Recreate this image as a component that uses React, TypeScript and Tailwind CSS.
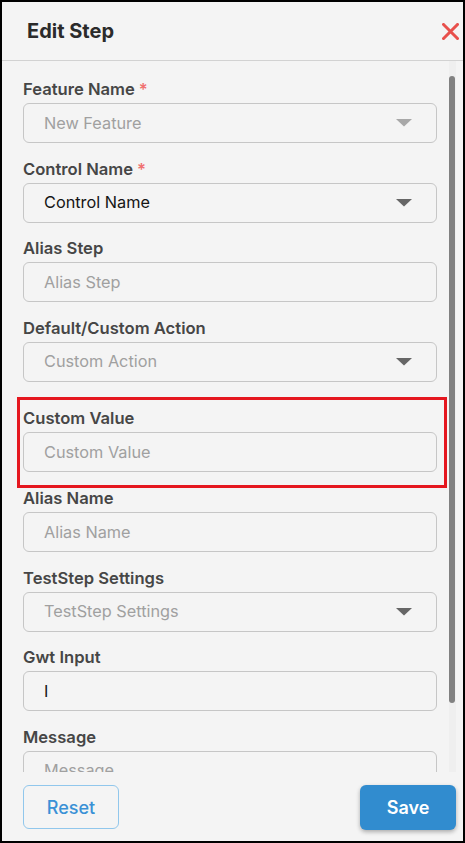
import React from 'react';

type Field = {
  label: string;
  placeholder?: string;
  value?: string;
  required?: boolean;
  select?: boolean;
  disabled?: boolean;
  highlight?: boolean;
};

const fields: Field[] = [
  { label: 'Feature Name', placeholder: 'New Feature', required: true, select: true, disabled: true },
  { label: 'Control Name', value: 'Control Name', required: true, select: true },
  { label: 'Alias Step', placeholder: 'Alias Step' },
  { label: 'Default/Custom Action', placeholder: 'Custom Action', select: true },
  { label: 'Custom Value', placeholder: 'Custom Value', highlight: true },
  { label: 'Alias Name', placeholder: 'Alias Name' },
  { label: 'TestStep Settings', placeholder: 'TestStep Settings', select: true },
  { label: 'Gwt Input', value: 'I' },
  { label: 'Message', placeholder: 'Message' },
];

const Caret: React.FC<{ dark?: boolean }> = ({ dark }) => (
  <svg width="16" height="8" viewBox="0 0 16 8" className="shrink-0">
    <path d="M0 0 H16 L8 7.5 Z" fill={dark ? '#666666' : '#a8a8a8'} />
  </svg>
);

const FormField: React.FC<{ field: Field }> = ({ field }) => (
  <div className="flex flex-col">
    <label className="text-[16.6px] leading-5 font-semibold text-[#464646] mb-1">
      {field.label}
      {field.required && <span className="text-[#f07070] ml-1">*</span>}
    </label>
    <div className="h-10 w-[414px] shrink-0 rounded-md border border-[#c6c6c6] flex items-center pl-5 pr-6">
      <span
        className={
          'flex-1 text-[16.3px] ' + (field.value ? 'text-[#151515]' : 'text-[#a0a0a0]')
        }
      >
        {field.value ?? field.placeholder}
      </span>
      {field.select && <Caret dark={!field.disabled} />}
    </div>
  </div>
);

export default function App() {
  return (
    <div
      className="w-[465px] h-[843px] border-2 border-black bg-[#f4f4f4] flex flex-col overflow-hidden"
      style={{ fontFamily: 'Inter, "Noto Sans", sans-serif' }}
    >
      {/* header */}
      <div className="h-[59px] shrink-0 border-b border-[#d2d2d2] flex items-center justify-between pl-[25px] pr-[4px]">
        <h2 className="text-[20px] font-bold text-[#2b2b2b]">Edit Step</h2>
        <svg width="17" height="17" viewBox="0 0 17 17">
          <path d="M1.5 1.5 L15.5 15.5 M15.5 1.5 L1.5 15.5" stroke="#e8504c" strokeWidth="3" strokeLinecap="square" />
        </svg>
      </div>

      {/* scroll body */}
      <div className="relative flex-1 overflow-hidden">
        <div className="flex flex-col gap-[15.5px] pl-[21px] pt-[18px]">
          {fields.map((f) =>
            f.highlight ? (
              <div
                key={f.label}
                className="-ml-[6px] -mb-[15.5px] w-[430px] border-[3px] border-[#e5171f] pl-[3px] pt-2 pb-[13px]"
              >
                <FormField field={f} />
              </div>
            ) : (
              <FormField key={f.label} field={f} />
            )
          )}
        </div>
        <div className="absolute top-0 bottom-0 left-[447px] w-[7px] bg-[#efefef]" />
        <div className="absolute top-[15px] left-[447px] w-[6px] h-[627px] rounded-full bg-[#818181]" />
      </div>

      {/* footer */}
      <div className="h-[69px] shrink-0 flex items-start justify-between pl-[21px] pr-[7px] pt-[13px]">
        <button className="h-[44px] w-[96px] rounded-md border border-[#91c7ec] text-[#3a91d6] text-[18px] font-medium">
          Reset
        </button>
        <button className="h-[45px] w-[96px] rounded-md bg-[#318ccf] text-white text-[18px] font-semibold shadow-[0_2px_4px_rgba(0,0,0,0.3)]">
          Save
        </button>
      </div>
    </div>
  );
}
